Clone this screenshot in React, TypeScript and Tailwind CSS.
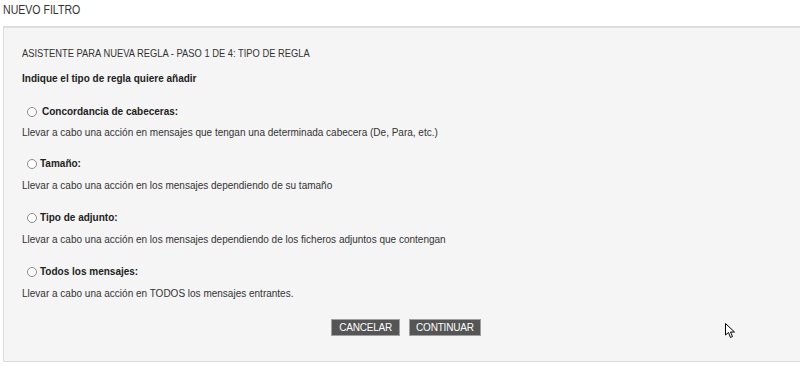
import React from 'react';

const rules = [
  {
    label: 'Concordancia de cabeceras:',
    desc: 'Llevar a cabo una acción en mensajes que tengan una determinada cabecera (De, Para, etc.)',
    gap: 'ml-[5px]',
  },
  {
    label: 'Tamaño:',
    desc: 'Llevar a cabo una acción en los mensajes dependiendo de su tamaño',
    gap: 'ml-[3px]',
  },
  {
    label: 'Tipo de adjunto:',
    desc: 'Llevar a cabo una acción en los mensajes dependiendo de los ficheros adjuntos que contengan',
    gap: 'ml-[3px]',
  },
  {
    label: 'Todos los mensajes:',
    desc: 'Llevar a cabo una acción en TODOS los mensajes entrantes.',
    gap: 'ml-[3px]',
  },
];

export default function App() {
  return (
    <div className="relative w-[800px] h-[367px] bg-white overflow-hidden font-['Liberation_Sans',Arial,sans-serif] text-[#222]">
      <h1 className="pl-[3px] pt-[3px] h-[26px] text-[12px] leading-[14px] text-[#333]">
        <span className="inline-block origin-left scale-x-[0.88] whitespace-nowrap">NUEVO FILTRO</span>
      </h1>

      <div className="ml-[3px] h-[336px] bg-[#f5f5f5] border-t-2 border-l border-b border-[#dddddd] pl-[18px] pt-[19px]">
        <h2 className="text-[11px] leading-[13px] text-[#333]">
          <span className="inline-block origin-left scale-x-[0.85] whitespace-nowrap">
            ASISTENTE PARA NUEVA REGLA - PASO 1 DE 4: TIPO DE REGLA
          </span>
        </h2>
        <p className="mt-[13px] text-[10px] leading-[12px] font-bold">
          Indique el tipo de regla quiere añadir
        </p>

        <div className="mt-[20px] flex flex-col">
          {rules.map((r, i) => (
            <div key={i} className={i === 0 ? '' : i === 1 ? 'mt-[18px]' : 'mt-[19px]'}>
              <label className="flex items-center pl-[5px] h-[14px]">
                <span className="w-[10px] h-[10px] rounded-full border border-[#8a8a8a] bg-white"></span>
                <span className={`${r.gap} text-[10px] leading-[12px] font-bold`}>{r.label}</span>
              </label>
              <p className={`${i === 0 ? 'mt-[8px]' : 'mt-[9px]'} text-[10px] leading-[12px] text-[#333]`}>{r.desc}</p>
            </div>
          ))}
        </div>

        <div className="mt-[19px] flex justify-center gap-[9px] pr-[10px]">
          <button className="h-[17px] px-[7px] bg-[#555555] border border-[#a0a0a0] text-white text-[10px] leading-[15px] tracking-[-0.2px]">
            CANCELAR
          </button>
          <button className="h-[17px] px-[6px] bg-[#555555] border border-[#a0a0a0] text-white text-[10px] leading-[15px] tracking-[-0.2px]">
            CONTINUAR
          </button>
        </div>
      </div>

      {/* mouse pointer */}
      <svg className="absolute left-[725px] top-[323px]" width="12" height="16" viewBox="0 0 12 16">
        <path d="M0.5 0.5 L0.5 12 L3.5 9.5 L5.5 14.5 L7.5 13.5 L5.5 9 L9.5 9 Z" fill="white" stroke="black" strokeWidth="1" />
      </svg>
    </div>
  );
}
